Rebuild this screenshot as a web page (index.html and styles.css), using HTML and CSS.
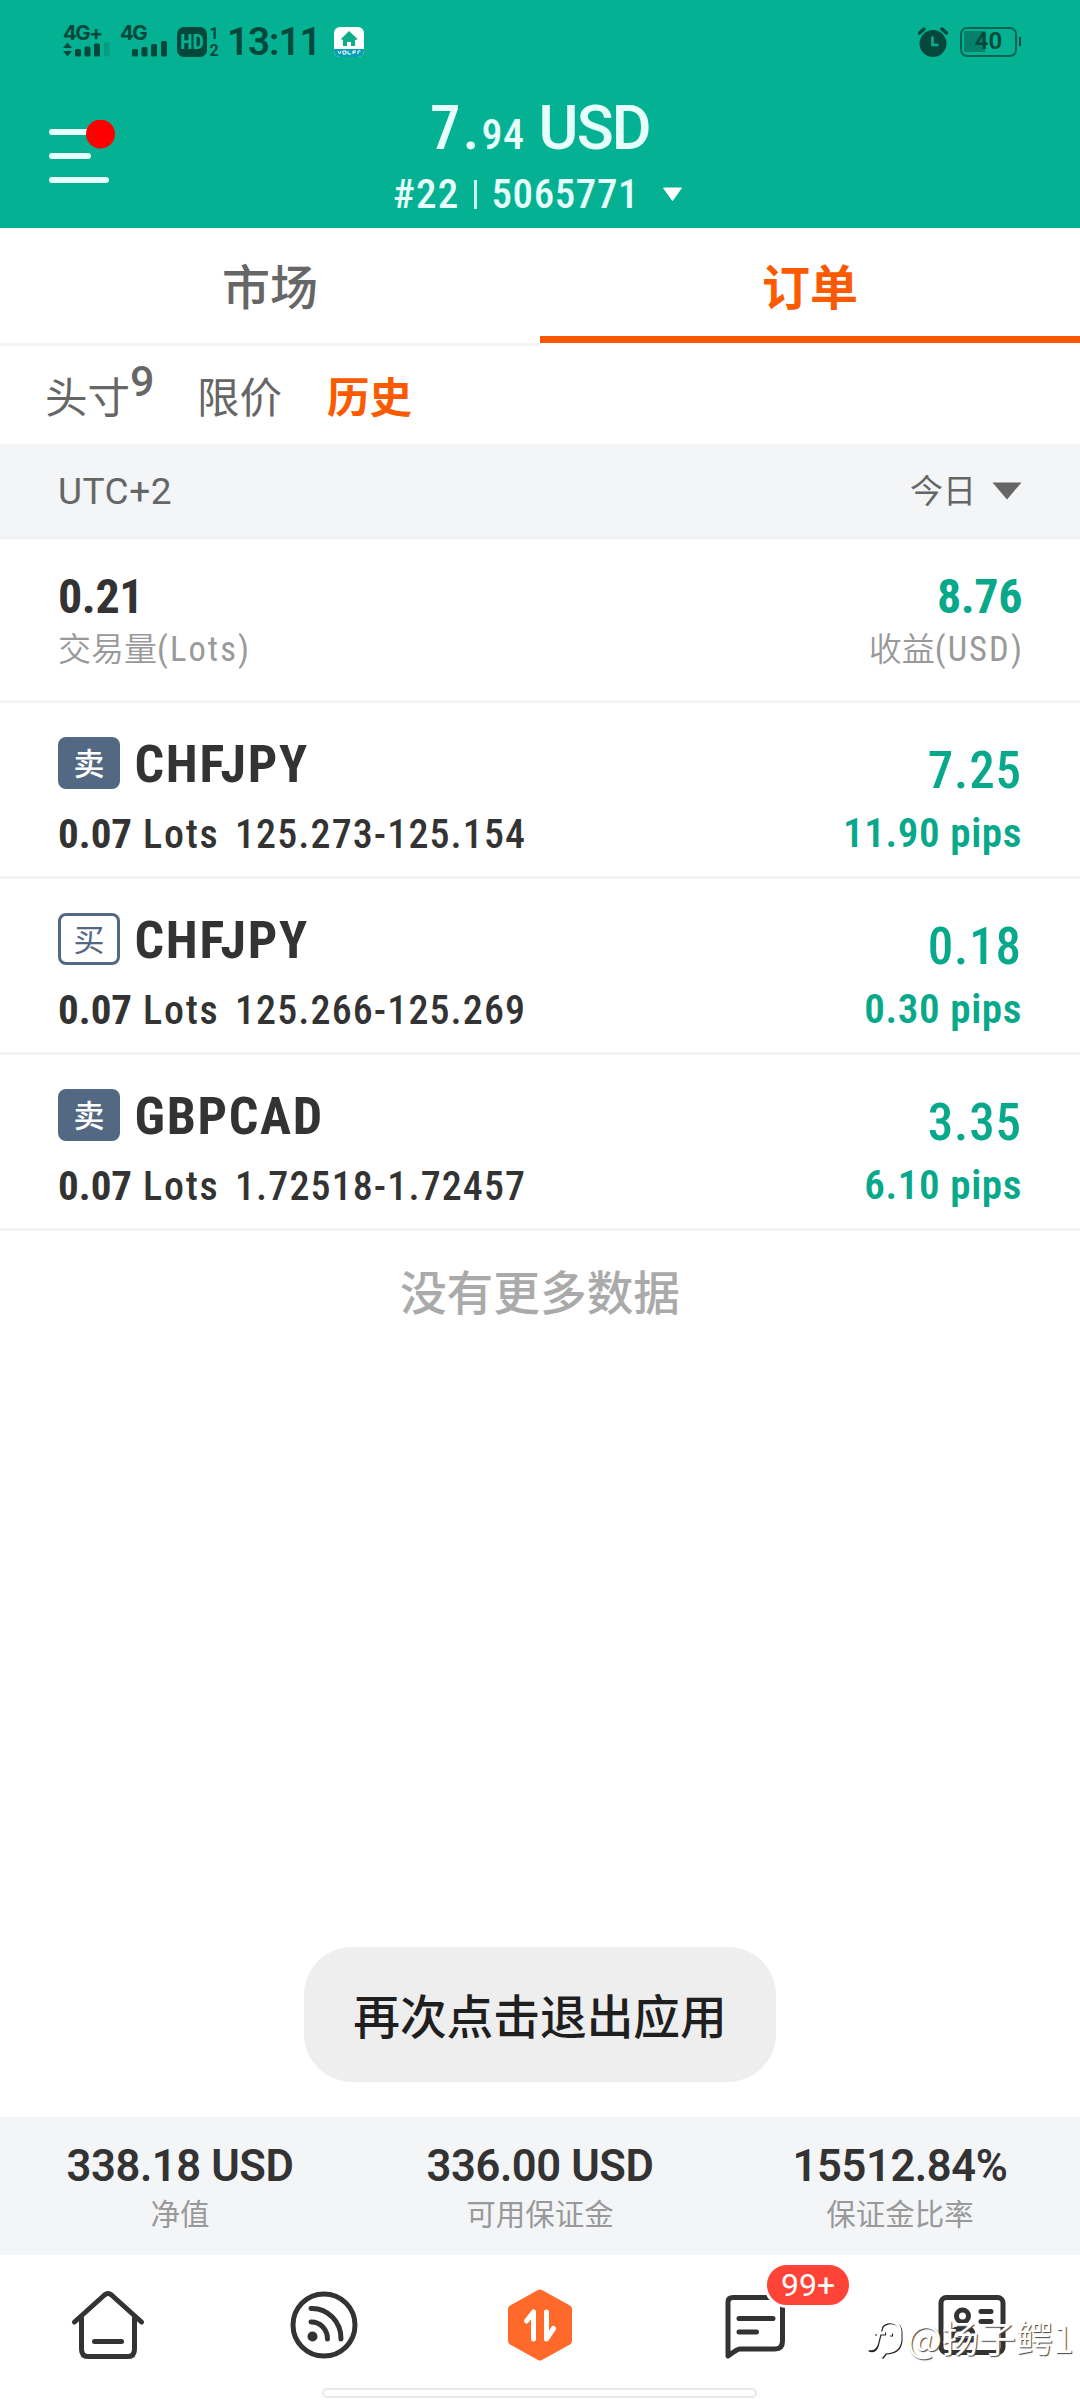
FILE: index.html
```html
<!DOCTYPE html>
<html lang="zh-CN">
<head>
<meta charset="utf-8">
<title>订单</title>
<link rel="stylesheet" href="styles.css">
</head>
<body>
<div class="screen">
  <header class="header">
    <div class="status">
      <div class="signal">
        <span class="net">4G+</span>
        <svg class="bars" width="48" height="16" viewBox="0 0 48 16"><path d="M0 7 4.500 1.500 9 7zM0 10h9L4.500 15.500z"/><rect x="12" y="8" width="6" height="7.500" rx="1.500"/><rect x="21.500" y="5.500" width="6" height="10" rx="1.500"/><rect x="31" y="2.500" width="6" height="13" rx="1.500"/><rect x="41" y="0.500" width="5.500" height="15" rx="1.500" opacity=".2"/></svg>
      </div>
      <div class="signal">
        <span class="net">4G</span>
        <svg class="bars" width="48" height="16" viewBox="0 0 48 16"><rect x="12" y="8" width="6" height="7.500" rx="1.500"/><rect x="21.500" y="6" width="6" height="9.500" rx="1.500"/><rect x="31" y="3" width="6" height="12.500" rx="1.500"/><rect x="41" y="0" width="6" height="15.500" rx="1.500"/></svg>
      </div>
      <div class="hd">HD</div>
      <div class="sims"><span>1</span><span>2</span></div>
      <div class="clock">13:11</div>
      <svg class="app" width="30" height="30" viewBox="0 0 30 30"><rect width="30" height="30" rx="6" fill="#fff"/><path d="M0 22h30v2a6 6 0 0 1-6 6H6a6 6 0 0 1-6-6z" fill="#0aa0b4"/><path d="M15 4 7 12l1.500 1L9 12.700V19h4v-4h4v4h4v-6.300l1 .3 1.500-1z" fill="#0bae86"/><path d="M4 24l1.500 3L7 24M9 24h3v3H9zM14 24v3h3M19 27v-3h3M19 25.500h2.500M24 27v-3h2.500" fill="none" stroke="#fff" stroke-width="1"/></svg>
      <svg class="alarm" width="30" height="30" viewBox="0 0 30 30"><circle cx="15" cy="16.500" r="13.500"/><path d="M1.500 6 6 2M28.500 6 24 2" stroke="#04483c" stroke-width="3.500" stroke-linecap="round"/><path d="M14.500 9.500v8.500h6" fill="none" stroke="#04b293" stroke-width="2.500"/></svg>
      <div class="battery"><span>40</span></div>
    </div>
    <div class="account">
      <svg class="menu" width="68" height="66" viewBox="0 0 68 66"><path d="M3 12h54M3 36h36M3 60h54" stroke="#e6fffb" stroke-width="6" stroke-linecap="round"/><circle cx="51.500" cy="14" r="14.500" fill="#f00"/></svg>
      <div class="figures">
        <div class="equity">7.<span class="cents">94</span><span class="currency">USD</span></div>
        <div class="login"><span class="rank">#22</span><i class="sep"></i><span class="number">5065771</span><svg width="21" height="15" viewBox="0 0 21 15"><path d="M1.500 1h18L10.500 13.500z" fill="#fff" stroke="#fff" stroke-linejoin="round"/></svg></div>
      </div>
    </div>
  </header>

  <nav class="tabs">
    <div class="tab">市场</div>
    <div class="tab tab-active">订单</div>
  </nav>

  <nav class="subtabs">
    <div class="subtab">头寸</div><span class="count">9</span>
    <div class="subtab">限价</div>
    <div class="subtab subtab-active">历史</div>
  </nav>

  <div class="filter">
    <span class="zone">UTC+2</span>
    <span class="period">今日</span>
    <svg width="30" height="18" viewBox="0 0 30 18"><path d="M.5.500h29L15 17.500z" fill="#666"/></svg>
  </div>

  <section class="summary">
    <div><div class="total">0.21</div><div class="caption">交易量<span class="unit">(Lots)</span></div></div>
    <div class="right"><div class="total gain">8.76</div><div class="caption">收益<span class="unit">(USD)</span></div></div>
  </section>

  <section class="trades">
    <div class="trade">
      <div>
        <div class="pair"><span class="side sell">卖</span><span class="symbol">CHFJPY</span></div>
        <div class="detail"><b>0.07</b><span class="lots">Lots</span><span class="range">125.273-125.154</span></div>
      </div>
      <div class="right"><div class="profit">7.25</div><div class="pips">11.90 pips</div></div>
    </div>
    <div class="trade">
      <div>
        <div class="pair"><span class="side buy">买</span><span class="symbol">CHFJPY</span></div>
        <div class="detail"><b>0.07</b><span class="lots">Lots</span><span class="range">125.266-125.269</span></div>
      </div>
      <div class="right"><div class="profit">0.18</div><div class="pips">0.30 pips</div></div>
    </div>
    <div class="trade">
      <div>
        <div class="pair"><span class="side sell">卖</span><span class="symbol">GBPCAD</span></div>
        <div class="detail"><b>0.07</b><span class="lots">Lots</span><span class="range">1.72518-1.72457</span></div>
      </div>
      <div class="right"><div class="profit">3.35</div><div class="pips">6.10 pips</div></div>
    </div>
    <p class="end">没有更多数据</p>
  </section>

  <section class="margins">
    <div class="stat"><div class="value">338.18 USD</div><div class="name">净值</div></div>
    <div class="stat"><div class="value">336.00 USD</div><div class="name">可用保证金</div></div>
    <div class="stat"><div class="value">15512.84%</div><div class="name">保证金比率</div></div>
  </section>

  <footer class="navbar">
    <div class="icons">
      <div class="item"><svg width="74" height="72" viewBox="0 0 74 72"><g fill="none" stroke="#333" stroke-width="5" stroke-linecap="round" stroke-linejoin="round"><path d="M3.500 33 33.500 6Q37 3 40.500 6L70.500 33"/><path d="M10.500 29V60Q10.500 67.500 17 67.500H57Q63.500 67.500 63.500 60V29"/><path d="M23.500 52.500h27"/></g></svg></div>
      <div class="item"><svg width="74" height="72" viewBox="0 0 74 72"><g fill="none" stroke="#333" stroke-width="5" stroke-linecap="round"><circle cx="37" cy="36" r="31"/><path d="M24 19.500A29 30 0 0 1 54 50M24 33A16 17 0 0 1 40.500 50"/></g><circle cx="25.500" cy="47.500" r="5" fill="#333"/></svg></div>
      <div class="item"><svg width="74" height="72" viewBox="0 0 74 72"><path d="M37 4.500 65 20V52L37 67.500 9 52V20z" fill="#ff6a2b" stroke="#ff6a2b" stroke-width="8" stroke-linejoin="round"/><path d="M23.500 32 30.500 23V50M43.500 23V50L50.500 39.500" fill="none" stroke="#fff" stroke-width="5" stroke-linecap="round" stroke-linejoin="round"/></svg></div>
      <div class="item"><svg width="74" height="72" viewBox="0 0 74 72"><g fill="none" stroke="#333" stroke-width="5" stroke-linecap="round" stroke-linejoin="round"><path d="M9 67V13Q9 8.500 14 8.500H58Q63.500 8.500 63.500 14V52Q63.500 60 56 60H20.500Q18.500 60 9 67z"/><path d="M20 29.500H54M20 43H37.500"/></g></svg><span class="badge">99+</span></div>
      <div class="item"><svg width="74" height="72" viewBox="0 0 74 72"><g fill="none" stroke="#333" stroke-width="5" stroke-linecap="round" stroke-linejoin="round"><rect x="6" y="8.500" width="62" height="55" rx="5.500"/><circle cx="27.500" cy="27" r="6"/><path d="M17 46Q18 40 23 40H33Q38 40 38 46M46 22.500H56M46 32.500H56M17 51H38"/></g></svg></div>
    </div>
    <div class="indicator"></div>
  </footer>

  <div class="toast">再次点击退出应用</div>
  <div class="watermark"><svg width="38" height="42" viewBox="0 0 38 42"><path d="M3 31Q10 34 12 24L16 8Q20 3 27 4Q34 5 35 13V22Q34 34 20 34L16 39M9 15H20M24 16H27" fill="none" stroke="#222" stroke-width="3"/><path d="M2 29Q9 32 11 23L15 7Q19 2 26 3Q33 4 34 12V21Q33 33 19 33L15 38M8 14H19M23 15H26" fill="none" stroke="#fff" stroke-width="3"/></svg><span>@扬子鳄1</span></div>
</div>
</body>
</html>
```
FILE: styles.css
```css
* { box-sizing: border-box; }
body { margin: 0; background: #fff; }
svg { display: block; flex: none; }

.screen {
  position: relative;
  display: flex;
  flex-direction: column;
  width: 1080px;
  height: 2400px;
  overflow: hidden;
  color: #333;
  font-family: "Roboto Condensed", "Noto Sans CJK SC", sans-serif;
}

.header { height: 228px; background: #04b293; color: #e6fffb; }

.status {
  display: flex;
  align-items: flex-start;
  height: 84px;
  padding: 24px 63px 0 63px;
  color: #04483c;
  fill: #04483c;
}
.signal { width: 57px; }
.net { display: block; height: 17px; font: 700 20.5px/17px Inter, sans-serif; letter-spacing: -1.5px; }
.hd {
  width: 30px;
  height: 30px;
  margin-top: 3px;
  border-radius: 7px;
  background: #04483c;
  color: #04b293;
  font: 700 20px/30px "Roboto Condensed", sans-serif;
  text-align: center;
}
.sims {
  display: flex;
  flex-direction: column;
  align-items: center;
  width: 14px;
  margin-right: 6px;
  padding-top: 1px;
  font: 700 16px/17px Roboto, sans-serif;
}
.clock { width: 107px; font: 600 38.5px/36px Roboto, sans-serif; letter-spacing: -1px; }
.app { margin-top: 3px; }
.alarm { margin: 3px 12px 0 auto; }
.battery {
  position: relative;
  width: 57px;
  height: 30px;
  margin-top: 3px;
  border: 2.5px solid #04483cbb;
  border-radius: 7px;
  background: linear-gradient(#04806b, #04806b) 2px 2px / 21px 21px no-repeat;
  font: 600 24px/25px Roboto, sans-serif;
  text-align: center;
}
.battery::after {
  content: "";
  position: absolute;
  right: -6px;
  top: 8px;
  width: 2px;
  height: 9px;
  background: #04483c;
}

.account { display: grid; grid-template-columns: 160px 1fr 160px; height: 144px; }
.menu { margin: 36px 0 0 49px; }
.figures { display: flex; flex-direction: column; align-items: center; padding-top: 14px; gap: 13px; }
.equity { height: 60px; font-size: 61px; font-weight: 500; line-height: 60px; letter-spacing: 2px; white-space: nowrap; }
.cents { font-size: 42px; letter-spacing: .5px; }
.currency { margin-left: 14px; font-family: Roboto, sans-serif; font-weight: 500; letter-spacing: -1.8px; }
.login { display: flex; align-items: center; height: 46px; font-size: 41px; font-weight: 500; line-height: 46px; }
.rank { letter-spacing: 1.2px; }
.number { letter-spacing: .6px; }
.sep { width: 3px; height: 29px; margin: 0 14px 0 15px; background: #c9f3ec; }
.login svg { margin: 0 4px 0 23px; }

.tabs { display: grid; grid-template-columns: 1fr 1fr; height: 118px; }
.tab {
  border-bottom: 3px solid #f2f3f4;
  color: #666;
  font: 500 48px/112px "Noto Sans CJK SC", sans-serif;
  text-align: center;
}
.tab-active { height: 115px; border-bottom: 7px solid #fb5602; color: #fb5a00; font-weight: 700; }

.subtabs { display: flex; height: 98px; padding-left: 45px; color: #666; }
.subtab { font: 400 42.5px/97px "Noto Sans CJK SC", sans-serif; margin-right: 45px; }
.subtab:first-child { margin-right: 0; }
.subtab-active { color: #fb5a00; font-weight: 700; }
.count { width: 67px; font: 500 43px/71px Roboto, sans-serif; }

.filter {
  display: flex;
  align-items: center;
  height: 95px;
  padding: 0 58px;
  border-bottom: 2px solid #f0f1f2;
  background: #f4f5f7;
  color: #666;
}
.zone { padding-top: 2px; font: 400 37px/60px Roboto, sans-serif; letter-spacing: .5px; }
.period { margin: -3px 16px 0 auto; font: 400 33px/60px "Noto Sans CJK SC", sans-serif; }

.summary {
  display: flex;
  justify-content: space-between;
  height: 164px;
  padding: 33px 58px 0;
  border-bottom: 3px solid #f3f4f5;
}
.right { text-align: right; }
.total { font-size: 48px; font-weight: 700; line-height: 50px; letter-spacing: -.4px; }
.gain { color: #08a88a; }
.caption { color: #999; font: 350 33px/51px "Noto Sans CJK SC", sans-serif; white-space: nowrap; }
.unit { margin-right: -2px; font: 400 34.5px/40px "Roboto Condensed", sans-serif; letter-spacing: 2.1px; }

.trades { flex: 1; }
.trade {
  display: flex;
  justify-content: space-between;
  height: 176px;
  padding: 34px 58px 0;
  border-bottom: 3px solid #f2f3f4;
}
.pair { display: flex; align-items: center; height: 52px; }
.side {
  width: 62px;
  height: 52px;
  border: 3px solid #536882;
  border-radius: 8px;
  font: 500 31px/43px "Noto Sans CJK SC", sans-serif;
  text-align: center;
}
.sell { background: #536882; color: #fff; }
.buy { color: #536882; font-weight: 400; }
.symbol { margin-left: 14.5px; padding-top: 3px; font-size: 52px; font-weight: 700; line-height: 54px; letter-spacing: 1.7px; }
.detail { display: flex; margin-top: 20px; font-size: 40px; font-weight: 500; line-height: 51px; white-space: nowrap; }
.detail b { font-size: 41px; width: 85px; }
.lots { width: 92px; letter-spacing: 1.8px; }
.range { letter-spacing: 1.1px; }
.profit { color: #08a88a; font-size: 51px; font-weight: 500; line-height: 68px; letter-spacing: .9px; }
.pips { margin-top: 3px; color: #08a88a; font-size: 41px; font-weight: 600; line-height: 50px; letter-spacing: .6px; }

.end { margin: 26px 0 0; color: #aaa; font: 500 46.7px/66px "Noto Sans CJK SC", sans-serif; text-align: center; }

.margins { display: grid; grid-template-columns: repeat(3, 1fr); height: 138px; padding-top: 24px; background: #f4f5f7; }
.stat { text-align: center; }
.value { font: 600 43.5px/52px Roboto, sans-serif; letter-spacing: -.4px; }
.name { color: #999; font: 400 29.5px/38px "Noto Sans CJK SC", sans-serif; }

.navbar { height: 145px; }
.icons { display: grid; grid-template-columns: repeat(5, 216px); height: 133px; padding-top: 34px; }
.item { position: relative; display: flex; justify-content: center; }
.badge {
  position: absolute;
  left: 116px;
  top: -27px;
  width: 88px;
  height: 46px;
  border: 3px solid #fff;
  border-radius: 23px;
  background: #ff4336;
  color: #fff;
  font: 400 32px/40px Roboto, sans-serif;
  text-align: center;
}
.indicator { width: 435px; height: 10px; margin-left: 322px; border: 2px solid #e9e9e9; border-radius: 5px; }

.toast {
  position: absolute;
  left: 304px;
  top: 1947px;
  width: 472px;
  height: 135px;
  border-radius: 48px;
  background: #eee;
  color: #1f1f1f;
  font: 500 46.7px/133px "Noto Sans CJK SC", sans-serif;
  text-align: center;
}
.watermark {
  position: absolute;
  left: 866px;
  top: 2312px;
  display: flex;
  align-items: center;
  gap: 3px;
  color: #fff;
  font: 400 37px/46px "Noto Sans CJK SC", sans-serif;
  text-shadow: 1px 1px 1px #444;
  white-space: nowrap;
}
.watermark svg { margin-top: 7px; }
```
